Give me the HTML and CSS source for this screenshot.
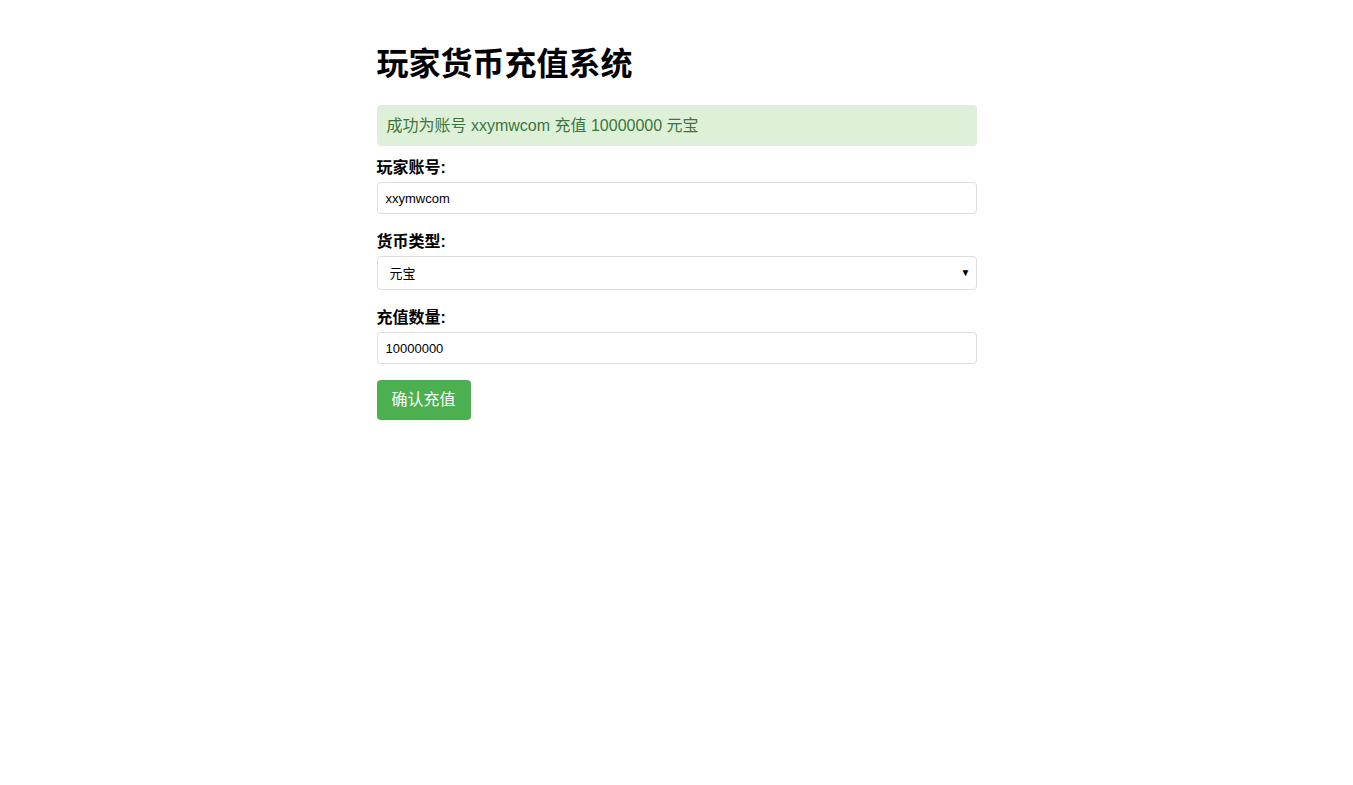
FILE: index.html
```html
<!DOCTYPE html>
<html lang="zh-CN">
<head>
  <meta charset="UTF-8">
  <meta name="viewport" content="width=device-width, initial-scale=1.0">
  <title>玩家货币充值系统</title>
  <link rel="stylesheet" href="styles.css">
</head>
<body>
  <div class="container">
    <h1>玩家货币充值系统</h1>

    <div class="alert-success">成功为账号 xxymwcom 充值 10000000 元宝</div>

    <form>
      <div class="form-group">
        <label for="account">玩家账号:</label>
        <input type="text" id="account" name="account" value="xxymwcom">
      </div>
      <div class="form-group">
        <label for="currency">货币类型:</label>
        <div class="select-wrap">
          <select id="currency" name="currency">
            <option value="yuanbao" selected>元宝</option>
            <option value="gold">金币</option>
            <option value="bind">绑定元宝</option>
          </select>
        </div>
      </div>
      <div class="form-group">
        <label for="amount">充值数量:</label>
        <input type="number" id="amount" name="amount" value="10000000">
      </div>
      <button type="button">确认充值</button>
    </form>
  </div>
</body>
</html>
```

FILE: styles.css
```css
body {
  font-family: "Liberation Sans", Arial, "Noto Sans CJK SC", sans-serif;
  margin: 0;
  color: #000;
  background: #fff;
}
.container {
  max-width: 600px;
  margin: 0 auto;
  padding: 20px 0;
}
h1 {
  font-size: 32px;
  line-height: 40px;
  margin: 24px 0 21px;
}
.alert-success {
  background-color: #dff0d8;
  color: #3c763d;
  padding: 10px;
  font-size: 16px;
  line-height: 21px;
  border-radius: 4px;
  margin-bottom: 9px;
}
.form-group {
  margin-bottom: 15px;
}
label {
  display: block;
  font-weight: bold;
  font-size: 16px;
  line-height: 22px;
  padding-top: 2px;
  margin-bottom: 3px;
}
input,
select {
  width: 100%;
  box-sizing: border-box;
  border: 1px solid #ddd;
  border-radius: 4px;
  font-family: "Liberation Sans", Arial, "Noto Sans CJK SC", sans-serif;
  font-size: 13px;
  color: #000;
  background: #fff;
}
input {
  height: 32px;
  padding: 0 8px;
}
input[type=number] {
  -moz-appearance: textfield;
}
input::-webkit-inner-spin-button,
input::-webkit-outer-spin-button {
  -webkit-appearance: none;
  margin: 0;
}
.select-wrap {
  position: relative;
}
select {
  height: 34px;
  padding: 0 12px;
  -webkit-appearance: none;
  appearance: none;
}
.select-wrap::after {
  content: "▼";
  position: absolute;
  right: 6px;
  top: 11px;
  font-size: 10px;
  line-height: 12px;
  color: #000;
  pointer-events: none;
}
button {
  margin-top: 1px;
  padding: 10px 15px;
  background-color: #4CAF50;
  color: white;
  border: none;
  border-radius: 4px;
  cursor: pointer;
  font-family: "Liberation Sans", Arial, "Noto Sans CJK SC", sans-serif;
  font-size: 16px;
  line-height: 20px;
}
button:hover {
  background-color: #45a049;
}
```
